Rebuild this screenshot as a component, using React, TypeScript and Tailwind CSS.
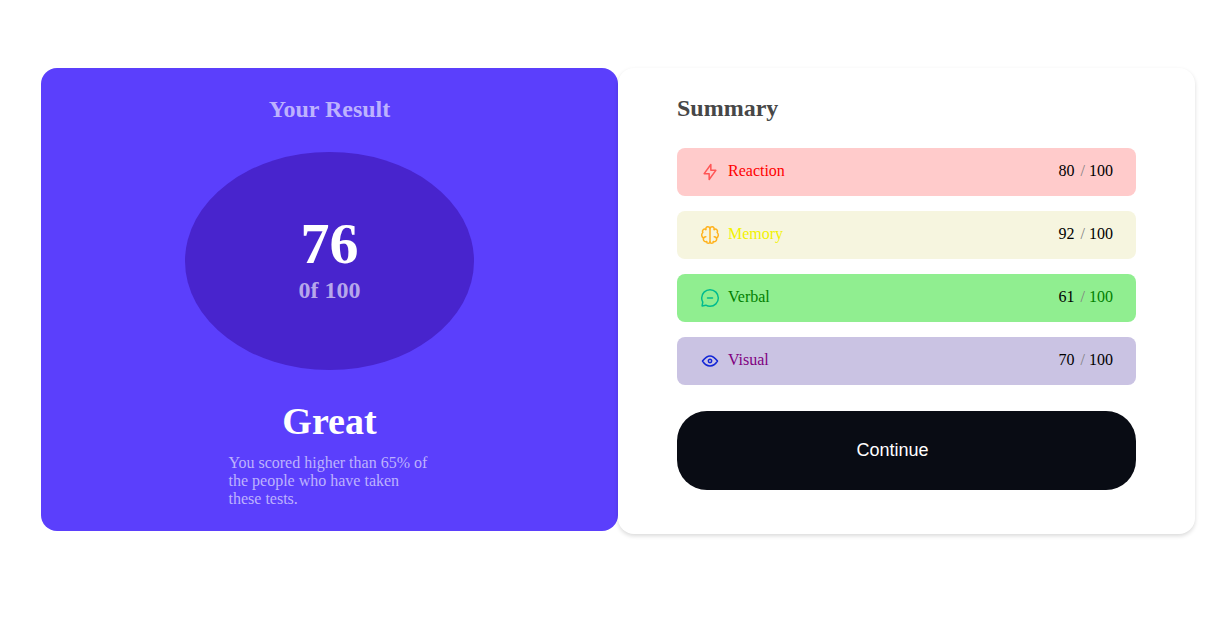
import type { ReactNode } from "react";

type Score = {
  label: string;
  value: number;
  row: string;
  text: string;
  total: string;
  stroke: string;
  icon: ReactNode;
};

const scores: Score[] = [
  {
    label: "Reaction",
    value: 80,
    row: "bg-[#ffcbcb]",
    text: "text-[#ff0000]",
    total: "text-black",
    stroke: "#FF5555",
    icon: <path d="M10.833 8.333V2.5l-6.666 9.167h5V17.5l6.666-9.167h-5Z" />,
  },
  {
    label: "Memory",
    value: 92,
    row: "bg-[#f6f5df]",
    text: "text-[#f2f200]",
    total: "text-black",
    stroke: "#FFB21E",
    icon: (
      <>
        <path d="M5.833 11.667a2.5 2.5 0 1 0 .834 4.858" />
        <path d="M3.553 13.004a3.333 3.333 0 0 1-.728-5.53m.025-.067a2.083 2.083 0 0 1 2.983-2.824m.199.054A2.083 2.083 0 1 1 10 3.75v12.917a1.667 1.667 0 0 1-3.333 0M14.167 11.667a2.5 2.5 0 1 1-.834 4.858" />
        <path d="M16.447 13.004a3.334 3.334 0 0 0 .728-5.53m-.025-.067a2.083 2.083 0 0 0-2.983-2.824M10 3.75a2.085 2.085 0 0 1 2.538-2.033 2.084 2.084 0 0 1 1.43 2.92m-.635 12.03a1.667 1.667 0 0 1-3.333 0" />
      </>
    ),
  },
  {
    label: "Verbal",
    value: 61,
    row: "bg-[#90ee90]",
    text: "text-[#008000]",
    total: "text-[#008000]",
    stroke: "#00BB8F",
    icon: (
      <path d="M7.5 10h5M10 18.333A8.333 8.333 0 1 0 1.667 10c0 1.518.406 2.942 1.115 4.167l-.699 3.75 3.75-.699A8.295 8.295 0 0 0 10 18.333Z" />
    ),
  },
  {
    label: "Visual",
    value: 70,
    row: "bg-[#cac3e3]",
    text: "text-[#800080]",
    total: "text-black",
    stroke: "#1125D6",
    icon: (
      <>
        <path d="M10 11.667a1.667 1.667 0 1 0 0-3.334 1.667 1.667 0 0 0 0 3.334Z" />
        <path d="M17.5 10c-1.574 2.492-4.402 5-7.5 5s-5.926-2.508-7.5-5C4.416 7.632 6.66 5 10 5s5.584 2.632 7.5 5Z" />
      </>
    ),
  },
];

function ScoreRow({ score }: { score: Score }) {
  return (
    <li className={`flex h-12 items-center rounded-lg px-[23px] pb-0.5 ${score.row}`}>
      <svg
        className="mt-0.5 size-5 shrink-0"
        viewBox="0 0 20 20"
        fill="none"
        stroke={score.stroke}
        strokeWidth="1.5"
        strokeLinecap="round"
        strokeLinejoin="round"
        aria-hidden="true"
      >
        {score.icon}
      </svg>
      <span className={`ml-2 ${score.text}`}>{score.label}</span>
      <span className="ml-auto flex">
        <span>{score.value}</span>
        <span className="ml-1.5 text-[#808080]">/</span>
        <span className={`ml-1 ${score.total}`}>100</span>
      </span>
    </li>
  );
}

export default function App() {
  return (
    <main className="grid grid-cols-2 items-start bg-white py-[68px] pr-[35px] pl-[41px] font-['Liberation_Serif','Times_New_Roman',serif] text-base text-black">
      <section className="flex flex-col items-center rounded-2xl bg-[#5b3ffc] pt-[27px] pb-[23px]">
        <h2 className="text-2xl leading-7 font-bold text-[#bdb2fe]">Your Result</h2>
        <div className="mt-[29px] flex h-[218px] w-1/2 flex-col items-center justify-center rounded-[50%] bg-[#4824cd] pb-1.5">
          <p className="text-[58px] leading-[64px] font-bold text-white">76</p>
          <p className="text-2xl leading-7 font-bold text-[#b6a7eb]">0f 100</p>
        </div>
        <h1 className="mt-7 text-[38px] leading-[46px] font-bold text-white">Great</h1>
        <p className="mt-2.5 w-[202px] text-base leading-[18px] text-[#bdb2fe]">
          You scored higher than 65% of the people who have taken these tests.
        </p>
      </section>
      <section className="rounded-2xl bg-white px-[59px] pt-[26px] pb-11 shadow-[0_2px_4px_rgba(0,0,0,0.15)]">
        <h2 className="text-2xl leading-7 font-bold text-[#474747]">Summary</h2>
        <ul className="mt-[26px] flex flex-col gap-[15px]">
          {scores.map((score) => (
            <ScoreRow key={score.label} score={score} />
          ))}
        </ul>
        <button
          type="button"
          className="mt-[26px] h-[79px] w-full cursor-pointer rounded-[30px] bg-[#090c14] pr-7 pb-0.5 font-['Liberation_Sans',Arial,sans-serif] text-lg text-white"
        >
          Continue
        </button>
      </section>
    </main>
  );
}
